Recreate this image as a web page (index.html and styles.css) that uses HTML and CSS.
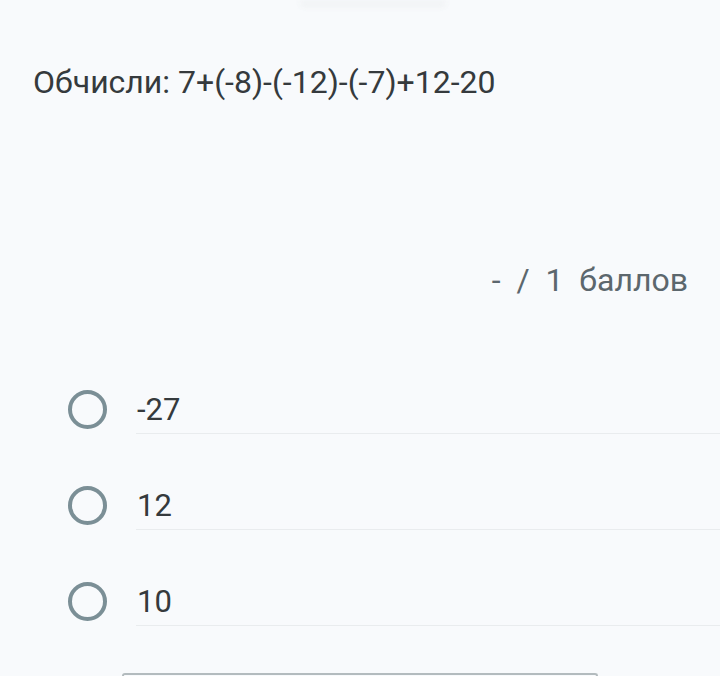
FILE: index.html
```html
<!DOCTYPE html>
<html lang="uk">
<head>
<meta charset="utf-8">
<link rel="stylesheet" href="styles.css">
<title>Питання</title>
</head>
<body>
<div class="page">
  <div class="top-fade"></div>
  <h1 class="question">Обчисли: 7+(-8)-(-12)-(-7)+12-20</h1>
  <div class="score">-&nbsp; /&nbsp; 1&nbsp; баллов</div>
  <ul class="options">
    <li class="option"><span class="radio"></span><span class="label">-27</span></li>
    <li class="option"><span class="radio"></span><span class="label">12</span></li>
    <li class="option"><span class="radio"></span><span class="label">10</span></li>
  </ul>
  <div class="next-box"></div>
</div>
</body>
</html>
```
FILE: styles.css
```css
html, body {
  margin: 0;
  padding: 0;
  background: #f8fafc;
}
body {
  font-family: Roboto, "Noto Sans", sans-serif;
  color: #34393c;
  width: 720px;
  height: 676px;
  overflow: hidden;
}
.page {
  display: flex;
  flex-direction: column;
}
.top-fade {
  width: 146px;
  height: 8px;
  margin-left: 300px;
  background: #f2f4f6;
  border-radius: 0 0 4px 4px;
  filter: blur(2px);
}
.question {
  margin: 54px 0 0 33px;
  font-size: 32px;
  font-weight: 400;
  line-height: 40px;
  color: #353a3d;
}
.score {
  margin: 158px 32px 0 0;
  text-align: right;
  font-size: 32px;
  line-height: 40px;
  color: #5c676d;
}
.options {
  list-style: none;
  margin: 86px 0 0 0;
  padding: 0 0 0 68px;
  display: flex;
  flex-direction: column;
  gap: 48px;
}
.option {
  display: flex;
  align-items: center;
  height: 48px;
}
.radio {
  width: 31px;
  height: 31px;
  border: 4px solid #7b8f96;
  border-radius: 50%;
  flex: none;
  margin-top: -1px;
}
.label {
  flex: 1;
  margin-left: 29px;
  height: 47px;
  line-height: 47px;
  border-bottom: 1px solid #e9ecee;
  font-size: 31px;
  color: #353a3d;
  padding-left: 1px;
}
.next-box {
  margin: 47px 0 0 122px;
  width: 472px;
  height: 1px;
  border: 2px solid #b3bbbe;
  border-bottom: none;
  border-radius: 6px 6px 0 0;
}
```
